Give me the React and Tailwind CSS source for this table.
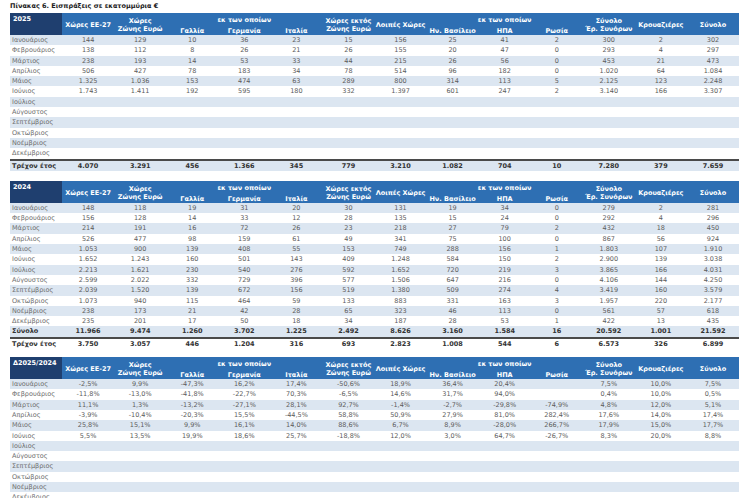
import React from 'react';

const COLS = 'grid grid-cols-[repeat(14,minmax(0,1fr))]';

const months = [
  'Ιανουάριος', 'Φεβρουάριος', 'Μάρτιος', 'Απρίλιος', 'Μάιος', 'Ιούνιος',
  'Ιούλιος', 'Αύγουστος', 'Σεπτέμβριος', 'Οκτώβριος', 'Νοέμβριος', 'Δεκέμβριος',
];

const t2025 = [
  ['144', '129', '10', '36', '23', '15', '156', '25', '41', '2', '300', '2', '302'],
  ['138', '112', '8', '26', '21', '26', '155', '20', '47', '0', '293', '4', '297'],
  ['238', '193', '14', '53', '33', '44', '215', '26', '56', '0', '453', '21', '473'],
  ['506', '427', '78', '183', '34', '78', '514', '96', '182', '0', '1.020', '64', '1.084'],
  ['1.325', '1.036', '153', '474', '63', '289', '800', '314', '113', '5', '2.125', '123', '2.248'],
  ['1.743', '1.411', '192', '595', '180', '332', '1.397', '601', '247', '2', '3.140', '166', '3.307'],
];

const t2024 = [
  ['148', '118', '19', '31', '20', '30', '131', '19', '34', '0', '279', '2', '281'],
  ['156', '128', '14', '33', '12', '28', '135', '15', '24', '0', '292', '4', '296'],
  ['214', '191', '16', '72', '26', '23', '218', '27', '79', '2', '432', '18', '450'],
  ['526', '477', '98', '159', '61', '49', '341', '75', '100', '0', '867', '56', '924'],
  ['1.053', '900', '139', '408', '55', '153', '749', '288', '156', '1', '1.803', '107', '1.910'],
  ['1.652', '1.243', '160', '501', '143', '409', '1.248', '584', '150', '2', '2.900', '139', '3.038'],
  ['2.213', '1.621', '230', '540', '276', '592', '1.652', '720', '219', '3', '3.865', '166', '4.031'],
  ['2.599', '2.022', '332', '729', '396', '577', '1.506', '647', '216', '0', '4.106', '144', '4.250'],
  ['2.039', '1.520', '139', '672', '156', '519', '1.380', '509', '274', '4', '3.419', '160', '3.579'],
  ['1.073', '940', '115', '464', '59', '133', '883', '331', '163', '3', '1.957', '220', '2.177'],
  ['238', '173', '21', '42', '28', '65', '323', '46', '113', '0', '561', '57', '618'],
  ['235', '201', '17', '50', '18', '34', '187', '28', '53', '1', '422', '13', '435'],
];

const tDelta = [
  ['-2,5%', '9,9%', '-47,3%', '16,2%', '17,4%', '-50,6%', '18,9%', '36,4%', '20,4%', '', '7,5%', '10,0%', '7,5%'],
  ['-11,8%', '-13,0%', '-41,8%', '-22,7%', '70,3%', '-6,5%', '14,6%', '31,7%', '94,0%', '', '0,4%', '10,0%', '0,5%'],
  ['11,1%', '1,3%', '-13,2%', '-27,1%', '28,1%', '92,7%', '-1,4%', '-2,7%', '-29,8%', '-74,9%', '4,8%', '12,0%', '5,1%'],
  ['-3,9%', '-10,4%', '-20,3%', '15,5%', '-44,5%', '58,8%', '50,9%', '27,9%', '81,0%', '282,4%', '17,6%', '14,0%', '17,4%'],
  ['25,8%', '15,1%', '9,9%', '16,1%', '14,0%', '88,6%', '6,7%', '8,9%', '-28,0%', '266,7%', '17,9%', '15,0%', '17,7%'],
  ['5,5%', '13,5%', '19,9%', '18,6%', '25,7%', '-18,8%', '12,0%', '3,0%', '64,7%', '-26,7%', '8,3%', '20,0%', '8,8%'],
];

const Single = ({ children }) => (
  <div className="flex items-center justify-center pt-[2px] leading-[8px] whitespace-nowrap text-center">{children}</div>
);

const Double = ({ top, bottom }) => (
  <div className="flex flex-col items-center pt-[4px] leading-[8px] whitespace-nowrap">
    <span>{top}</span>
    <span>{bottom}</span>
  </div>
);

const Group = ({ items }) => (
  <div className="col-span-3 flex flex-col items-center justify-between pt-[4px] leading-[7px]">
    <span>εκ των οποίων</span>
    <div className="grid grid-cols-3 w-full text-center whitespace-nowrap">
      {items.map((i) => <span key={i}>{i}</span>)}
    </div>
  </div>
);

const Header = ({ label }) => (
  <div className={`${COLS} h-[22px] bg-[#2e6fb3] text-white font-bold text-[6.5px]`}>
    <div className="bg-[#1f3f6f] pl-[3px] pt-[3px] leading-[7px]">{label}</div>
    <Single>Χώρες ΕΕ-27</Single>
    <Double top="Χώρες" bottom="Ζώνης Ευρώ" />
    <Group items={['Γαλλία', 'Γερμανία', 'Ιταλία']} />
    <Double top="Χώρες εκτός" bottom="Ζώνης Ευρώ" />
    <Single>Λοιπές Χώρες</Single>
    <Group items={['Ην. Βασίλειο', 'ΗΠΑ', 'Ρωσία']} />
    <Double top="Σύνολο" bottom="Έρ. Συνόρων" />
    <Single>Κρουαζιέρες</Single>
    <Single>Σύνολο</Single>
  </div>
);

const Row = ({ label, values = [], striped, bold }) => (
  <div
    className={`${COLS} h-[10.3px] leading-[10.3px] text-[6.5px] ${striped ? 'bg-[#dce6f1]' : 'bg-white'} ${bold ? 'font-bold text-[#333]' : 'text-[#5c5c5c]'}`}
  >
    <div className={`pl-[2px] whitespace-nowrap ${bold ? 'text-[#333]' : 'text-[#6e6e6e]'}`}>{label}</div>
    {Array.from({ length: 13 }).map((_, i) => (
      <div key={i} className="text-center whitespace-nowrap">{values[i] || ''}</div>
    ))}
  </div>
);

const Table = ({ label, data, total, current, className }) => (
  <div className={className}>
    <Header label={label} />
    {months.map((m, i) => (
      <Row key={m} label={m} values={data[i]} striped={i % 2 === 0} />
    ))}
    {total && <Row label="Σύνολο" values={total} striped bold />}
    {current && (
      <>
        <div className="h-[2px] bg-[#4a4a4a]"></div>
        <Row label="Τρέχον έτος" values={current} striped={!total} bold />
      </>
    )}
  </div>
);

export default function App() {
  return (
    <div className="w-[750px] bg-white pl-[10px] font-['DejaVu_Sans',sans-serif]">
      <div className="w-[729px]">
        {/* Title */}
        <div className="h-[13px] pt-[2px] text-[6.5px] leading-[8px] font-bold text-[#222]">
          Πίνακας 6. Εισπράξεις σε εκατομμύρια €
        </div>

        <Table
          label="2025"
          data={t2025}
          current={['4.070', '3.291', '456', '1.366', '345', '779', '3.210', '1.082', '704', '10', '7.280', '379', '7.659']}
        />

        <Table
          className="mt-[10px]"
          label="2024"
          data={t2024}
          total={['11.966', '9.474', '1.260', '3.702', '1.225', '2.492', '8.626', '3.160', '1.584', '16', '20.592', '1.001', '21.592']}
          current={['3.750', '3.057', '446', '1.204', '316', '693', '2.823', '1.008', '544', '6', '6.573', '326', '6.899']}
        />

        <Table className="mt-[8px]" label="Δ2025/2024" data={tDelta} />
      </div>
    </div>
  );
}
